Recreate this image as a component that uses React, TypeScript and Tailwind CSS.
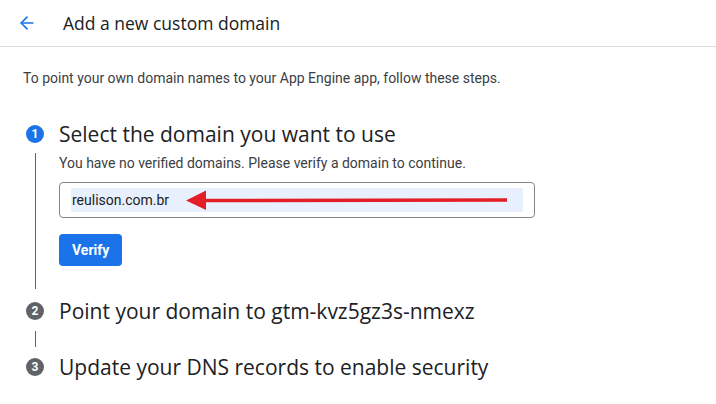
import { ArrowLeft } from "lucide-react";

const headFont = { fontFamily: "'Open Sans', Roboto, sans-serif" };

function StepBadge({ n, active }: { n: number; active?: boolean }) {
  return (
    <div
      className={`flex h-[18px] w-[18px] shrink-0 items-center justify-center rounded-full text-[12px] font-bold text-white ${
        active ? "bg-[#1a73e8]" : "bg-[#5f6368]"
      }`}
    >
      {n}
    </div>
  );
}

export default function App() {
  return (
    <div className="h-[404px] w-[716px] overflow-hidden bg-white text-[#202124] font-['Roboto',sans-serif]">
      {/* header */}
      <div className="flex h-[47px] items-center border-b border-[#dadce0] pl-[17px]">
        <ArrowLeft className="h-5 w-5 text-[#1a73e8]" strokeWidth={2} />
        <h1 className="ml-[26px] text-[17.5px] text-[#202124]" style={headFont}>
          Add a new custom domain
        </h1>
      </div>

      <p className="ml-[23px] mt-[21px] text-[14px] leading-[20px] text-[#3c4043]">
        To point your own domain names to your App Engine app, follow these steps.
      </p>

      {/* steps */}
      <div className="mt-[32px] pl-[26px]">
        {/* step 1 */}
        <div className="flex h-[28px] items-center gap-[15px]">
          <StepBadge n={1} active />
          <h2 className="text-[21px] leading-[28px]" style={headFont}>
            Select the domain you want to use
          </h2>
        </div>
        <div className="ml-[8.5px] mt-[5px] flex">
          <div className="w-px bg-[#5f6368]" />
          <div className="ml-[23.5px] pb-[23px]">
            <p className="text-[14px] leading-[20px] text-[#3c4043]">
              You have no verified domains. Please verify a domain to continue.
            </p>
            <div className="relative mt-[9px] flex h-[36px] w-[476px] items-center rounded-[4px] border border-[#80868b] px-[11px]">
              <div className="flex h-[24px] w-full items-center bg-[#e8f0fe] px-[1px] text-[14px] text-[#202124]">
                reulison.com.br
              </div>
              <svg
                className="absolute left-[126px] top-[7px]"
                width="324"
                height="20"
                viewBox="0 0 324 20"
              >
                <line x1="16" y1="10.5" x2="321" y2="10" stroke="#e41e26" strokeWidth="3.5" />
                <polygon points="0,10.5 20,0.5 20,20" fill="#e41e26" />
              </svg>
            </div>
            <button className="mt-[16px] h-[32px] rounded-[4px] bg-[#1a73e8] px-[13px] text-[14px] font-bold text-white">
              Verify
            </button>
          </div>
        </div>

        {/* step 2 */}
        <div className="mt-[8px] flex h-[28px] items-center gap-[15px]">
          <StepBadge n={2} />
          <h2 className="text-[21px] leading-[28px]" style={headFont}>
            Point your domain to gtm-kvz5gz3s-nmexz
          </h2>
        </div>
        <div className="ml-[8.5px] h-[28px] py-[6px]">
          <div className="h-full w-px bg-[#5f6368]" />
        </div>

        {/* step 3 */}
        <div className="flex h-[28px] items-center gap-[15px]">
          <StepBadge n={3} />
          <h2 className="text-[21px] leading-[28px]" style={headFont}>
            Update your DNS records to enable security
          </h2>
        </div>
      </div>
    </div>
  );
}
